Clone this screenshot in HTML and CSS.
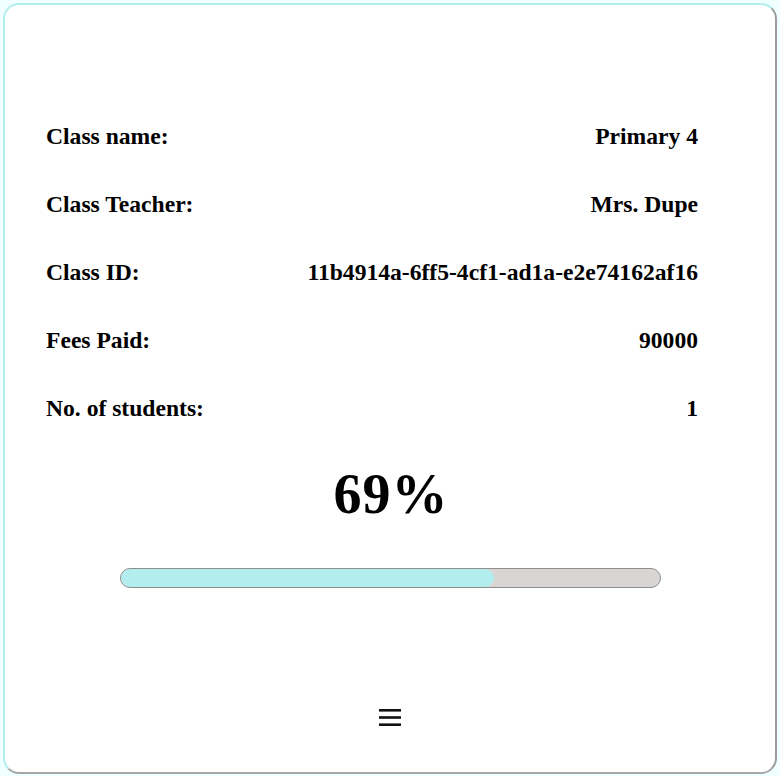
FILE: index.html
```
<!DOCTYPE html>
<html>
<head>
<meta charset="utf-8">
<link rel="stylesheet" href="styles.css">
</head>
<body>
<div class="card">
  <div class="rows">
    <div class="row"><span>Class name:</span><span>Primary 4</span></div>
    <div class="row"><span>Class Teacher:</span><span>Mrs. Dupe</span></div>
    <div class="row"><span>Class ID:</span><span>11b4914a-6ff5-4cf1-ad1a-e2e74162af16</span></div>
    <div class="row"><span>Fees Paid:</span><span>90000</span></div>
    <div class="row"><span>No. of students:</span><span>1</span></div>
  </div>
  <div class="percent">69%</div>
  <div class="bar"><div class="fill" style="width: 69.3%"></div></div>
  <div class="menu">
    <svg width="22" height="18" viewBox="0 0 22 18" aria-hidden="true">
      <rect x="0" y="0" width="22" height="2.6" fill="#111"/>
      <rect x="0" y="7.2" width="22" height="2.6" fill="#111"/>
      <rect x="0" y="14.4" width="22" height="2.6" fill="#111"/>
    </svg>
  </div>
</div>
</body>
</html>
```
FILE: styles.css
```
html, body {
  margin: 0;
  padding: 0;
}
body {
  background: #f0ffff;
  padding: 3px;
  font-family: "Liberation Serif", "Times New Roman", serif;
  color: #000;
}
.card {
  box-sizing: border-box;
  width: 774px;
  height: 771px;
  background: #fff;
  border: 2px solid;
  border-color: #b2eeee #9c9c9c #a8a8a8 #b2eeee;
  border-radius: 16px;
  padding-top: 97px;
  display: flex;
  flex-direction: column;
}
.rows {
  padding: 0 77px 0 41px;
}
.row {
  height: 68px;
  display: flex;
  justify-content: space-between;
  align-items: center;
  font-size: 23.6px;
  font-weight: bold;
}
.percent {
  margin-top: 21px;
  text-align: center;
  font-size: 56px;
  font-weight: bold;
  line-height: 62px;
  letter-spacing: 1px;
  padding-left: 2px;
}
.bar {
  box-sizing: border-box;
  width: 541px;
  height: 20px;
  margin: 43px auto 0;
  border: 1px solid #8e8e8e;
  border-radius: 10px;
  background: #d9d5d5;
  overflow: hidden;
}
.fill {
  height: 100%;
  background: #b2eeee;
  border-radius: 10px;
}
.menu {
  margin-top: 121px;
  display: flex;
  justify-content: center;
}
.menu svg {
  display: block;
}
```
